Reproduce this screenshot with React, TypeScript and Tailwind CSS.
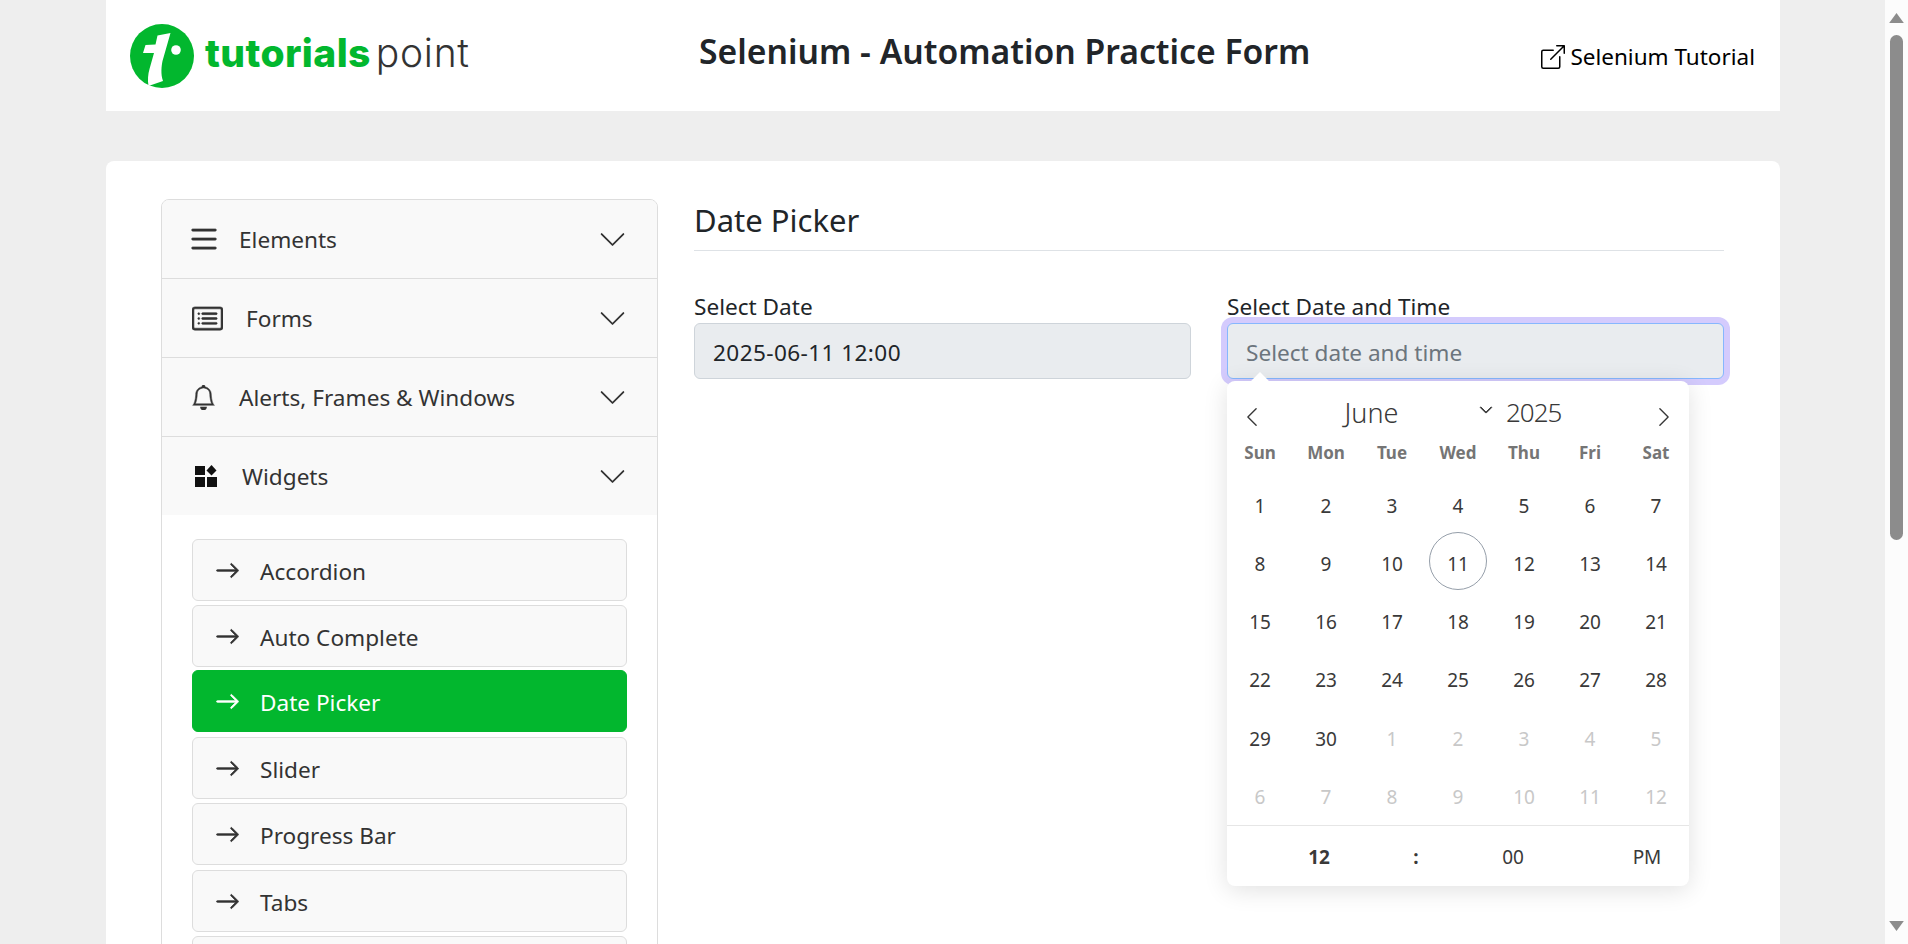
import { BsArrowRight, BsBell, BsBoxArrowUpRight, BsCardList, BsChevronDown, BsChevronLeft, BsChevronRight, BsList } from "react-icons/bs";
import type { ReactNode } from "react";

const MENU: { label: string; icon: ReactNode }[] = [
  { label: "Elements", icon: <BsList className="w-[36px] h-[36px] -ml-[6px] -mr-[6px] stroke-current stroke-[0.25px]" /> },
  { label: "Forms", icon: <BsCardList className="w-[31px] h-[31px] stroke-current stroke-[0.3px]" /> },
  { label: "Alerts, Frames & Windows", icon: <BsBell className="w-[25px] h-[25px] -ml-[1px] stroke-current stroke-[0.3px]" /> },
];

// the last box only shows its top edge above the fold
const ITEMS = ["Accordion", "Auto Complete", "Date Picker", "Slider", "Progress Bar", "Tabs", ""];

const WEEKDAYS = ["Sun", "Mon", "Tue", "Wed", "Thu", "Fri", "Sat"];

// 30 days of June, the rest are spill over from July
const DAYS = [
  ...Array.from({ length: 30 }, (_, i) => ({ n: i + 1, muted: false })),
  ...Array.from({ length: 12 }, (_, i) => ({ n: i + 1, muted: true })),
];

function WidgetsIcon() {
  return (
    <svg viewBox="0 0 22 22" className="w-[22px] h-[22px] ml-[3px]" fill="#111">
      <rect x="0" y="1" width="10" height="9" />
      <rect x="0" y="12" width="10" height="10" />
      <rect x="12" y="12" width="10" height="10" />
      <path d="M16.5 0 L21.5 5.5 L16.5 10.5 L11.5 5.5 Z" />
    </svg>
  );
}

function Logo() {
  return (
    <div className="flex items-center w-[593px] shrink-0 pl-[24px]">
      <svg viewBox="0 0 64 64" className="w-[64px] h-[64px] shrink-0">
        <circle cx="32" cy="32" r="32" fill="#02b72e" />
        <path
          d="M27.5 11.5 L40.5 9 L32.5 37 C31.5 42 30.5 50 33 57 L18.5 62 C17.5 56 18 50 19.5 45 L24 29 L13 29 L15.5 21 L25.5 20.5 Z"
          fill="#fff"
        />
        <circle cx="46" cy="26" r="4.8" fill="#fff" />
      </svg>
      <div className="ml-[11px] -mt-[6px] flex items-baseline font-['Inter',sans-serif] text-[39px] leading-none">
        <span className="font-extrabold text-[#02b72e] tracking-[0.4px]">tutorials</span>
        <span className="font-light text-[#333] ml-[5px] tracking-[0.7px]">point</span>
      </div>
    </div>
  );
}

function Scrollbar() {
  return (
    <div className="w-[23px] h-screen shrink-0 bg-[#fcfcfc] flex flex-col items-center">
      <svg viewBox="0 0 16 12" className="w-[15px] h-[11px] mt-[13px] shrink-0" fill="#8c8c8c">
        <path d="M8 0 L16 11 L0 11 Z" />
      </svg>
      <div className="w-[13px] h-[505px] mt-[11px] bg-[#8c8c8c] rounded-full shrink-0" />
      <svg viewBox="0 0 16 12" className="w-[15px] h-[11px] mt-[381px] shrink-0" fill="#8c8c8c">
        <path d="M0 0 L16 0 L8 11 Z" />
      </svg>
    </div>
  );
}

function Calendar() {
  return (
    <div className="absolute left-0 top-[58px] w-[462px] h-[505px] bg-white rounded-[8px] shadow-[0_4px_24px_rgba(0,0,0,0.12)] text-[#393939]">
      <div className="absolute left-[26px] -top-[6px] w-[14px] h-[14px] rotate-45 bg-white" />
      <div className="relative flex items-center h-[50px] pt-[12px]">
        <div className="w-[49px] flex justify-center pt-[9px]">
          <BsChevronLeft className="w-[22px] h-[22px]" />
        </div>
        <span className="w-[191px] text-center text-[27px] font-light leading-none">June</span>
        <BsChevronDown className="w-[14px] h-[14px] ml-[12px] -mt-[4px] stroke-current stroke-1" />
        <span className="ml-[13px] text-[26px] tracking-[-1px] font-light leading-none">2025</span>
        <div className="ml-auto w-[50px] flex justify-center pt-[9px]">
          <BsChevronRight className="w-[22px] h-[22px]" />
        </div>
      </div>
      <div className="grid grid-cols-7 h-[44px] mb-[2px] items-center">
        {WEEKDAYS.map((d) => (
          <span key={d} className="text-center text-[17px] font-bold text-[#757575]">
            {d}
          </span>
        ))}
      </div>
      <div className="grid grid-cols-7 auto-rows-[58.2px] justify-items-center items-center">
        {DAYS.map((d, i) => (
          <span
            key={i}
            className={`flex items-center justify-center w-[58px] h-[58px] rounded-full text-[19px] ${
              d.muted ? "text-[#c8c8c8]" : ""
            } ${!d.muted && d.n === 11 ? "border border-[#959ea9] -translate-y-[3px] pt-[6px]" : ""}`}
          >
            {d.n}
          </span>
        ))}
      </div>
      <div className="flex items-center h-[60px] -mt-[1px] pt-[3px] border-t border-[#e6e6e6] text-[19px] text-center">
        <span className="w-[184px] font-bold">12</span>
        <span className="w-[10px] font-bold">:</span>
        <span className="w-[184px]">00</span>
        <span className="w-[84px]">PM</span>
      </div>
    </div>
  );
}

export default function App() {
  return (
    <div className="flex h-screen overflow-hidden bg-[#eeeeee] font-['Noto_Sans',sans-serif] text-[#212529]">
      <div className="flex-1 min-w-0 pl-[106px] pr-[105px]">
        <header className="flex items-center h-[111px] bg-white">
          <Logo />
          <h1 className="text-[33.7px] font-semibold leading-none -mt-[7px]">Selenium - Automation Practice Form</h1>
          <a className="ml-auto pr-[25px] pt-[3px] flex items-center text-black text-[22.5px]">
            <BsBoxArrowUpRight className="w-[24px] h-[24px] mr-[5px]" />
            Selenium Tutorial
          </a>
        </header>

        <main className="flex mt-[50px] pt-[38px] pl-[55px] h-[900px] bg-white rounded-t-[8px]">
          <aside className="w-[497px] shrink-0 border border-[#dddddd] rounded-t-[8px] overflow-hidden text-[#333] text-[22.6px]">
            {MENU.map((m) => (
              <div key={m.label} className="flex items-center h-[79px] pl-[30px] pr-[30px] bg-[#f9f9f9] border-b border-[#dddddd]">
                {m.icon}
                <span className="ml-[23px] pt-[2px]">{m.label}</span>
                <BsChevronDown className="w-[29px] h-[29px] ml-auto" />
              </div>
            ))}
            <div className="flex items-center h-[78px] pl-[30px] pr-[30px] bg-[#f9f9f9]">
              <WidgetsIcon />
              <span className="ml-[25px] pt-[2px]">Widgets</span>
              <BsChevronDown className="w-[29px] h-[29px] ml-auto" />
            </div>
            <ul className="flex flex-col gap-[4px] pt-[24px] px-[30px]">
              {ITEMS.map((item) => {
                const active = item === "Date Picker";
                return (
                  <li
                    key={item}
                    className={`flex items-center h-[62px] pl-[22px] rounded-[6px] border ${
                      active ? "bg-[#02b72e] border-[#02b72e] text-white -mt-[1px] mb-[1px]" : "bg-[#f9f9f9] border-[#dddddd]"
                    } ${item === "Tabs" ? "mt-[1px]" : ""}`}
                  >
                    {item && <BsArrowRight className="w-[25px] h-[25px] stroke-current stroke-[0.5px]" />}
                    {item && <span className="ml-[20px] pt-[3px]">{item}</span>}
                  </li>
                );
              })}
            </ul>
          </aside>

          <section className="ml-[36px] w-[1030px] shrink-0">
            <h2 className="h-[52px] border-b border-[#dee2e6] text-[31px] leading-[42px]">Date Picker</h2>
            <div className="grid grid-cols-2 gap-[36px] mt-[38px] text-[22.6px]">
              <div>
                <label className="block leading-[34px] pt-[1px] h-[34px]">Select Date</label>
                <div className="flex items-center h-[56px] pl-[18px] pt-[3px] rounded-[6px] border border-[#ced4da] bg-[#e9ecef] tracking-[0.4px]">2025-06-11 12:00</div>
              </div>
              <div>
                <label className="block leading-[34px] pt-[1px] h-[34px]">Select Date and Time</label>
                <div className="relative">
                  <div className="flex items-center h-[56px] pl-[18px] pt-[3px] rounded-[6px] border border-[#86b7fe] bg-[#e9ecef] text-[#6c757d] shadow-[0_0_0_6px_#d4cbfd]">
                    Select date and time
                  </div>
                  <Calendar />
                </div>
              </div>
            </div>
          </section>
        </main>
      </div>
      <Scrollbar />
    </div>
  );
}
